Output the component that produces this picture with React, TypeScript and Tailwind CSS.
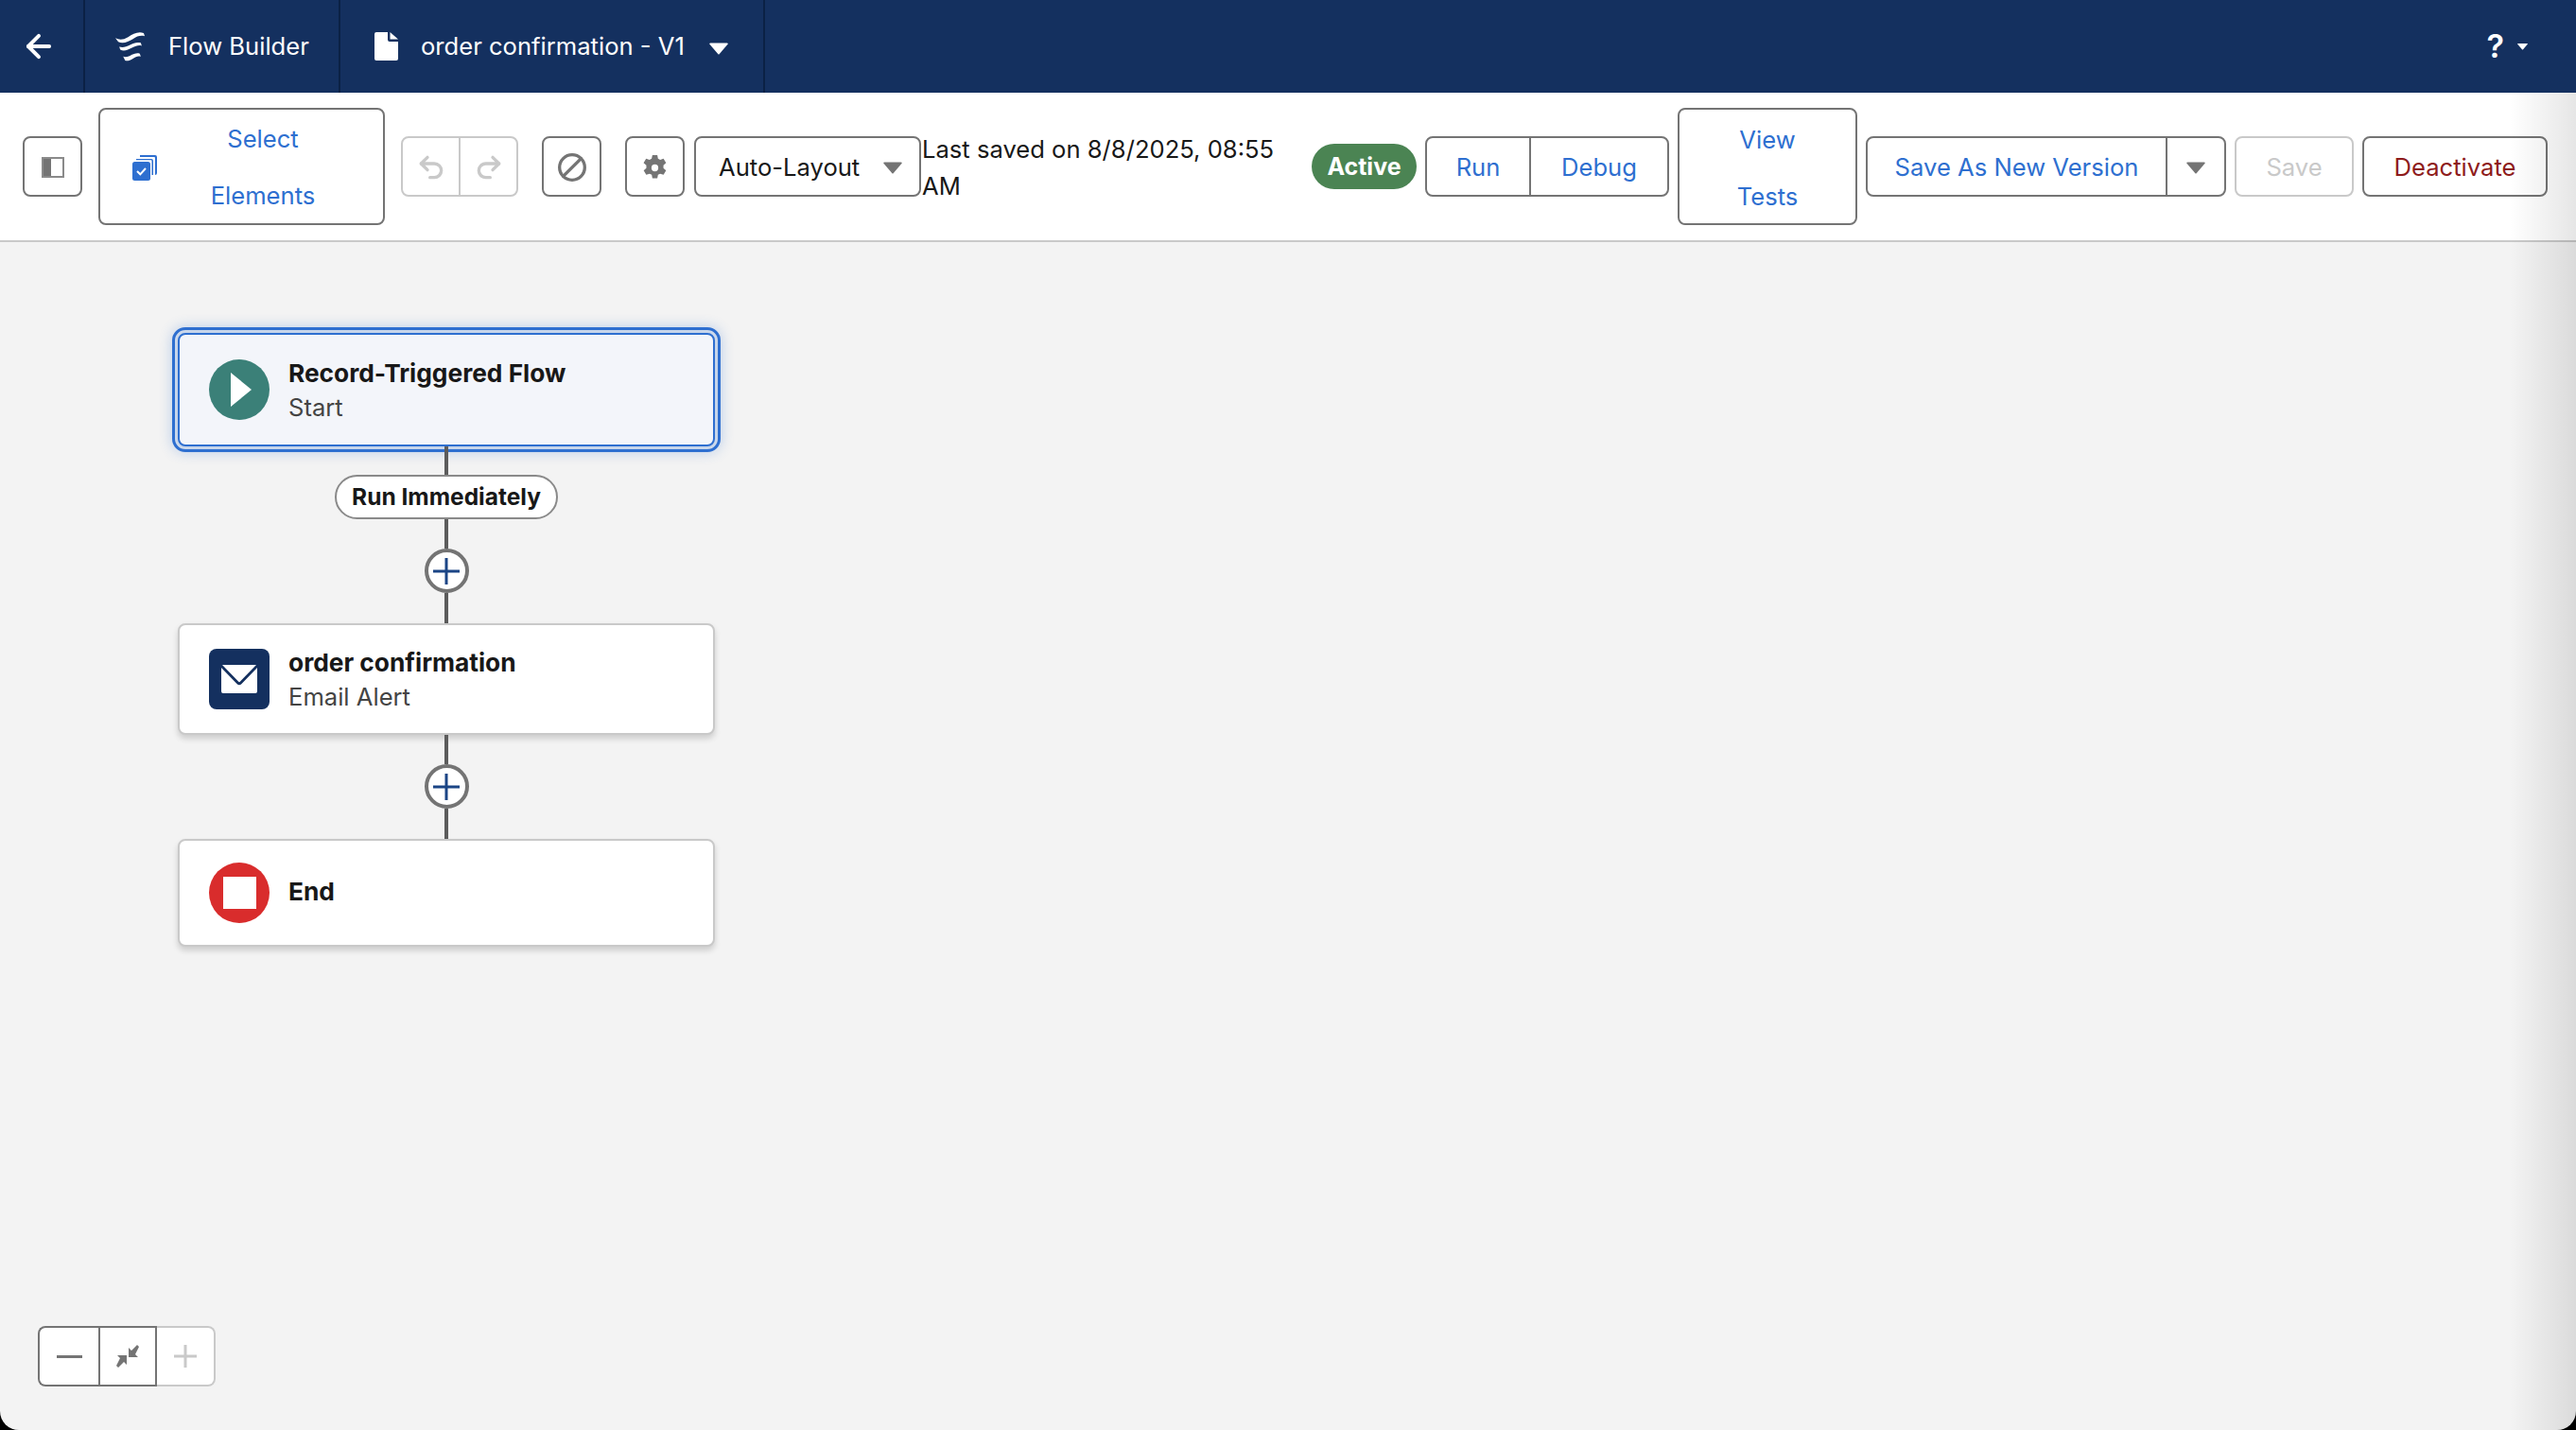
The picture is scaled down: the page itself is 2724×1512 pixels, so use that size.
import React from 'react';
import { ArrowLeft, Ban, Redo2, Undo2 } from 'lucide-react';

const Caret = ({ className }: { className: string }) => (
  <svg viewBox="0 0 20 14" className={className}>
    <path d="M1 1.5h18a.8.8 0 0 1 .6 1.3l-9 10.4a.8.8 0 0 1-1.2 0L.4 2.8A.8.8 0 0 1 1 1.5z" fill="currentColor" />
  </svg>
);

const FlowLogo = () => (
  <svg viewBox="0 0 30 30" className="w-[31px] h-[31px] text-white">
    <path d="M0 6c4 2 8 2 13-1 5-3 10-6 16-4l1 3c-4-1-8 0-12 3-5 3-10 5-15 3z" fill="currentColor" />
    <path d="M4 15c4 1 7 0 11-2 4-2 7-3 11-2l1 3c-3-1-6 0-10 2-4 2-8 4-12 2z" fill="currentColor" />
    <path d="M8 25c3 1 6 0 9-2 3-1 5-2 8-1l1 3c-3-1-5 0-8 2-3 2-6 3-8 2z" fill="currentColor" />
  </svg>
);

const DocIcon = () => (
  <svg viewBox="0 0 25 30" className="w-[25px] h-[30px] text-white">
    <path d="M2 0h12v8a2 2 0 0 0 2 2h9v18a2 2 0 0 1-2 2H2a2 2 0 0 1-2-2V2a2 2 0 0 1 2-2z" fill="currentColor" />
    <path d="M16.500 0 25 7.500h-8.500z" fill="currentColor" />
  </svg>
);

const GearIcon = () => (
  <svg viewBox="0 0 26 26" className="w-[27px] h-[27px] text-[#747474]">
    <path
      fillRule="evenodd"
      d="M10.500 0h5l.7 3.500 2.200 1.200 3.400-1.100 2.600 4.400-2.700 2.400v2.800l2.700 2.400-2.600 4.400-3.400-1.100-2.200 1.200-.7 3.500h-5l-.7-3.500-2.200-1.200-3.400 1.100-2.600-4.400 2.700-2.400v-2.800L1.500 8 4.100 3.600l3.400 1.100 2.200-1.200zM13 9.500a3.500 3.500 0 1 0 0 7 3.500 3.500 0 0 0 0-7z"
      fill="currentColor"
    />
  </svg>
);

const PlusNode = () => (
  <div className="w-[47px] h-[47px] rounded-full border-[4px] border-[#747474] bg-white flex items-center justify-center">
    <svg viewBox="0 0 28 28" className="w-[28px] h-[28px]">
      <path d="M14 0v28M0 14h28" stroke="#1b4585" strokeWidth="3" />
    </svg>
  </div>
);

const Line = ({ className }: { className: string }) => <div className={`w-[4px] bg-[#5c5c5c] ${className}`} />;

const Title = ({ children }: { children: React.ReactNode }) => (
  <div className="font-bold text-[26.300px] leading-[36px] text-[#181818]">{children}</div>
);

const Sub = ({ children }: { children: React.ReactNode }) => (
  <div className="text-[25.6px] leading-[36px] text-[#444444]">{children}</div>
);

const boxBtn = 'h-[64px] rounded-[8px] border-2 border-[#747474] bg-white flex items-center justify-center pt-[2px]';

export default function App() {
  return (
    <div className="w-[2724px] h-[1512px] bg-black font-['Inter',sans-serif] overflow-hidden">
      <div className="relative h-full bg-[#f3f3f3] rounded-b-[20px] overflow-hidden flex flex-col">
        {/* top bar */}
        <div className="h-[98px] shrink-0 bg-[#14305f] flex items-center text-white text-[25.6px]">
          <div className="w-[90px] h-full border-r-2 border-[#0b2145] flex items-center pl-[22px]">
            <ArrowLeft size={38} strokeWidth={2.5} />
          </div>
          <div className="w-[270px] h-full border-r-2 border-[#0b2145] flex items-center pl-[32px] gap-[25px]">
            <FlowLogo />
            <span>Flow Builder</span>
          </div>
          <div className="w-[449px] h-full border-r-2 border-[#0b2145] flex items-center pl-[36px]">
            <DocIcon />
            <span className="ml-[24px]">order confirmation - V1</span>
            <Caret className="w-[20px] h-[14px] ml-[26px] mt-[4px]" />
          </div>
          <div className="ml-auto mr-[51px] flex items-center">
            <span className="font-semibold text-[34px] leading-none">?</span>
            <Caret className="w-[11px] h-[8px] ml-[14px]" />
          </div>
        </div>

        {/* toolbar */}
        <div className="h-[158px] shrink-0 bg-white border-b-2 border-[#c9c9c9] flex items-center pl-[24px] text-[25.6px]">
          <button className={`${boxBtn} w-[63px]`}>
            <svg viewBox="0 0 24 22" className="w-[24px] h-[22px]">
              <rect x="1" y="1" width="22" height="20" fill="none" stroke="#8a8a8a" strokeWidth="2" />
              <rect x="2" y="2" width="8" height="18" fill="#747474" />
            </svg>
          </button>
          <button className="ml-[17px] w-[303px] h-[124px] rounded-[8px] border-2 border-[#747474] bg-white flex items-center pl-[34px] pt-[2px] text-[#2e6fd0] leading-[60px]">
            <svg viewBox="0 0 26 27" className="w-[26px] h-[27px] shrink-0">
              <path d="M8 0h16a2 2 0 0 1 2 2v17a2 2 0 0 1-2 2V3a1 1 0 0 0-1-1H8z" fill="#2e6fd0" />
              <path d="M4 4h16a2 2 0 0 1 2 2v15h-1.500V6a.800.800 0 0 0-.8-.8H4z" fill="#2e6fd0" />
              <rect x="0" y="7" width="19" height="20" rx="2.500" fill="#2e6fd0" />
              <path d="M5 17l3.300 3.300L14 14" stroke="#fff" strokeWidth="2" fill="none" />
            </svg>
            <span className="w-[190px] ml-[17px] text-center">Select Elements</span>
          </button>
          <div className="ml-[17px] w-[124px] h-[64px] rounded-[8px] border-2 border-[#c9c9c9] bg-white flex text-[#c9c9c9]">
            <div className="w-[61px] border-r-[2px] border-[#c9c9c9] flex items-center justify-center pt-[2px]">
              <Undo2 size={32} strokeWidth={2.5} />
            </div>
            <div className="flex-1 flex items-center justify-center pt-[2px]">
              <Redo2 size={32} strokeWidth={2.5} />
            </div>
          </div>
          <button className={`${boxBtn} ml-[25px] w-[63px] text-[#747474]`}>
            <Ban size={32} strokeWidth={2.5} className="rotate-90" />
          </button>
          <button className={`${boxBtn} ml-[25px] w-[63px]`}>
            <GearIcon />
          </button>
          <button className={`${boxBtn} ml-[10px] w-[240px] !justify-start pl-[24px] text-[#181818]`}>
            <span>Auto-Layout</span>
            <Caret className="w-[20px] h-[14px] ml-[25px] text-[#747474]" />
          </button>
          <div className="ml-[1px] w-[380px] leading-[39px] text-[#181818] pt-[2px]">Last saved on 8/8/2025, 08:55 AM</div>
          <div className="ml-[32px] w-[111px] h-[48px] rounded-full bg-[#4b8453] text-white font-bold text-[25px] flex items-center justify-center pt-[2px]">
            Active
          </div>
          <div className="ml-[9px] h-[64px] w-[258px] rounded-[8px] border-2 border-[#747474] bg-white flex text-[#2e6fd0]">
            <div className="w-[110px] border-r-2 border-[#747474] flex items-center justify-center pt-[2px]">Run</div>
            <div className="flex-1 flex items-center justify-center pt-[2px]">Debug</div>
          </div>
          <button className="ml-[9px] w-[190px] h-[124px] rounded-[8px] border-2 border-[#747474] bg-white text-[#2e6fd0] leading-[60px] px-[50px] pt-[2px] text-center">
            View Tests
          </button>
          <div className="ml-[9px] h-[64px] w-[381px] rounded-[8px] border-2 border-[#747474] bg-white flex text-[#2e6fd0]">
            <div className="w-[317px] border-r-2 border-[#747474] flex items-center justify-center pt-[2px]">Save As New Version</div>
            <div className="flex-1 flex items-center justify-center pt-[2px]">
              <Caret className="w-[20px] h-[14px] text-[#747474]" />
            </div>
          </div>
          <button className="ml-[9px] w-[126px] h-[64px] rounded-[8px] border-2 border-[#c9c9c9] bg-white text-[#c9c9c9] pt-[2px]">Save</button>
          <button className={`${boxBtn} ml-[9px] w-[196px] text-[#8e1b1b]`}>Deactivate</button>
        </div>

        {/* canvas */}
        <div className="flex-1 flex flex-col items-center w-[568px] ml-[188px] pt-[96px]">
          <div className="w-full h-[120px] rounded-[8px] bg-[#f3f5fa] flex items-center pl-[31px] gap-[20px] border-2 border-[#2e6fd0] outline-[3px] outline-offset-[3px] outline-[#2e6fd0] shadow-[0_0_14px_6px_rgba(46,111,208,0.3)]">
            <div className="w-[64px] h-[64px] rounded-full bg-[#3b8078] flex items-center justify-center shrink-0">
              <svg viewBox="0 0 22 36" className="w-[22px] h-[36px] ml-[4px]">
                <path d="M0 0 22 18 0 36z" fill="#fff" />
              </svg>
            </div>
            <div className="pt-[1px]">
              <Title>Record-Triggered Flow</Title>
              <Sub>Start</Sub>
            </div>
          </div>
          <Line className="h-[30px]" />
          <div className="h-[47px] px-[16px] rounded-full border-2 border-[#8a8a8a] bg-white flex items-center font-bold text-[24.500px] text-[#181818]">
            Run Immediately
          </div>
          <Line className="h-[31px]" />
          <PlusNode />
          <Line className="h-[32px]" />
          <div className="w-full h-[118px] rounded-[8px] bg-white border-2 border-[#c9c9c9] shadow-[0_4px_6px_rgba(0,0,0,0.16)] flex items-center pl-[31px] gap-[20px]">
            <div className="w-[64px] h-[64px] rounded-[8px] bg-[#14305f] flex items-center justify-center shrink-0">
              <svg viewBox="0 0 38 30" className="w-[38px] h-[30px]">
                <path d="M1 0h36L19.500 18a1 1 0 0 1-1 0z" fill="#fff" />
                <path d="M0 3l16.500 17a3.500 3.500 0 0 0 5 0L38 3v25a2 2 0 0 1-2 2H2a2 2 0 0 1-2-2z" fill="#fff" />
              </svg>
            </div>
            <div className="pt-[1px]">
              <Title>order confirmation</Title>
              <Sub>Email Alert</Sub>
            </div>
          </div>
          <Line className="h-[31px]" />
          <PlusNode />
          <Line className="h-[32px]" />
          <div className="w-full h-[114px] rounded-[8px] bg-white border-2 border-[#c9c9c9] shadow-[0_4px_6px_rgba(0,0,0,0.16)] flex items-center pl-[31px] gap-[20px]">
            <div className="w-[64px] h-[64px] rounded-full bg-[#d92c2c] flex items-center justify-center shrink-0">
              <div className="w-[35px] h-[34px] bg-white" />
            </div>
            <div className="mb-[2px]">
              <Title>End</Title>
            </div>
          </div>
        </div>

        {/* zoom controls */}
        <div className="absolute left-[40px] top-[1402px] h-[64px] w-[188px] flex bg-white rounded-[8px]">
          <div className="w-[64px] border-2 border-r-0 border-[#747474] rounded-l-[8px] flex items-center justify-center">
            <div className="w-[27px] h-[3px] bg-[#747474]" />
          </div>
          <div className="w-[62px] border-2 border-[#747474] flex items-center justify-center">
            <svg viewBox="0 0 26 26" className="w-[26px] h-[26px]">
              <path d="M25 3l-2-2-6 6-3-3v10h10l-3-3zM1 23l2 2 6-6 3 3V12H2l3 3z" fill="#747474" />
            </svg>
          </div>
          <div className="flex-1 border-2 border-l-0 border-[#c9c9c9] rounded-r-[8px] flex items-center justify-center">
            <svg viewBox="0 0 24 24" className="w-[24px] h-[24px]">
              <path d="M12 0v24M0 12h24" stroke="#c9c9c9" strokeWidth="3" />
            </svg>
          </div>
        </div>

        {/* window shade on the right edge */}
        <div className="absolute top-[98px] bottom-0 right-0 w-[70px] pointer-events-none bg-gradient-to-r from-transparent to-black/10" />
      </div>
    </div>
  );
}
